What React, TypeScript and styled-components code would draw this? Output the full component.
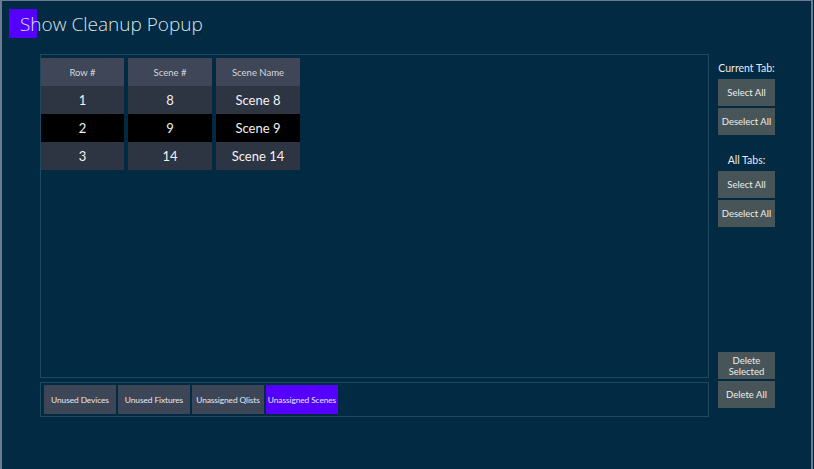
import styled, { createGlobalStyle } from 'styled-components';

const GlobalStyle = createGlobalStyle`
    html, body {
        margin: 0;
        padding: 0;
        background: #022a42;
    }
    * {
        box-sizing: border-box;
    }
`;

const columns = [
    { key: 'row', label: 'Row #', width: 83 },
    { key: 'scene', label: 'Scene #', width: 84 },
    { key: 'name', label: 'Scene Name', width: 84 }
];

const rows = [
    { row: '1', scene: '8', name: 'Scene 8', selected: false },
    { row: '2', scene: '9', name: 'Scene 9', selected: true },
    { row: '3', scene: '14', name: 'Scene 14', selected: false }
];

const tabs = ['Unused Devices', 'Unused Fixtures', 'Unassigned Qlists', 'Unassigned Scenes'];

const StyledWindow = styled.div`
    width: 813px;
    height: 469px;
    background: #022a42;
    border-top: 1px solid #6d7b92;
    border-left: 2px solid #6d7b92;
    border-right: 2px solid #6d7b92;
    font-family: Lato, 'Open Sans', sans-serif;
    color: #e6eaee;
    overflow: hidden;
`;

const StyledTitle = styled.h1`
    position: relative;
    margin: 0;
    padding: 8px 0 0 18px;
    height: 53px;
    font-family: 'Open Sans', sans-serif;
    font-weight: 300;
    font-size: 19px;
    line-height: 30px;
    color: #dde4ea;

    &::before {
        content: '';
        position: absolute;
        left: 7px;
        top: 8px;
        width: 28px;
        height: 29px;
        background: #5500ff;
    }

    span {
        position: relative;
    }
`;

const StyledBody = styled.div`
    display: grid;
    grid-template-columns: 669px 57px;
    column-gap: 9px;
    padding-left: 38px;
`;

const StyledLeft = styled.div`
    display: flex;
    flex-direction: column;
    gap: 4px;
`;

const StyledPanel = styled.div`
    height: 324px;
    border: 1px solid #1d4a5e;
    padding: 3px 0 0 0;
`;

const StyledTable = styled.div`
    display: grid;
    grid-template-columns: ${columns.map((c) => `${c.width}px`).join(' ')};
    column-gap: 4px;
    grid-auto-rows: 28px;
`;

const StyledCell = styled.div<{ $kind: 'header' | 'row' | 'selected' }>`
    display: flex;
    align-items: center;
    justify-content: center;
    background: ${({ $kind }) =>
        $kind === 'header' ? '#3e4657' : $kind === 'selected' ? '#000000' : '#2d3442'};
    color: ${({ $kind }) => ($kind === 'header' ? '#d3d7dd' : '#f2f2f2')};
    font-size: ${({ $kind }) => ($kind === 'header' ? '9.5px' : '13px')};
`;

const StyledTabBar = styled.div`
    display: flex;
    gap: 2px;
    height: 35px;
    border: 1px solid #1d4a5e;
    padding: 2px 3px;
`;

const StyledTab = styled.div<{ $active: boolean }>`
    display: flex;
    align-items: center;
    justify-content: center;
    width: 72px;
    height: 29px;
    background: ${({ $active }) => ($active ? '#5500ff' : '#3d4657')};
    color: #e8e8ee;
    font-size: 8.4px;
    letter-spacing: -0.1px;
    white-space: nowrap;
`;

const StyledSide = styled.div`
    display: flex;
    flex-direction: column;
    align-items: stretch;
`;

const StyledLabel = styled.div<{ $top: number }>`
    margin-top: ${({ $top }) => $top}px;
    height: 17px;
    text-align: center;
    font-size: 10.5px;
    line-height: 17px;
    color: #e8ecf0;
`;

const StyledSideButton = styled.button<{ $top?: number }>`
    margin-top: ${({ $top }) => $top ?? 2}px;
    height: 27px;
    border: none;
    padding: 0 2px;
    background: #485558;
    color: #eceeee;
    font-family: Lato, 'Open Sans', sans-serif;
    font-size: 9.5px;
    line-height: 11px;
`;

const App = () => (
    <>
        <GlobalStyle />
        <StyledWindow>
            <StyledTitle>
                <span>Show Cleanup Popup</span>
            </StyledTitle>
            <StyledBody>
                <StyledLeft>
                    <StyledPanel>
                        <StyledTable>
                            {columns.map((c) => (
                                <StyledCell key={c.key} $kind="header">
                                    {c.label}
                                </StyledCell>
                            ))}
                            {rows.map((r) =>
                                columns.map((c) => (
                                    <StyledCell
                                        key={`${r.row}-${c.key}`}
                                        $kind={r.selected ? 'selected' : 'row'}
                                    >
                                        {r[c.key as 'row' | 'scene' | 'name']}
                                    </StyledCell>
                                ))
                            )}
                        </StyledTable>
                    </StyledPanel>
                    <StyledTabBar>
                        {tabs.map((t, i) => (
                            <StyledTab key={t} $active={i === tabs.length - 1}>
                                {t}
                            </StyledTab>
                        ))}
                    </StyledTabBar>
                </StyledLeft>
                <StyledSide>
                    <StyledLabel $top={6}>Current Tab:</StyledLabel>
                    <StyledSideButton $top={2}>Select All</StyledSideButton>
                    <StyledSideButton>Deselect All</StyledSideButton>
                    <StyledLabel $top={17}>All Tabs:</StyledLabel>
                    <StyledSideButton $top={2}>Select All</StyledSideButton>
                    <StyledSideButton>Deselect All</StyledSideButton>
                    <StyledSideButton $top={125}>
                        Delete
                        <br />
                        Selected
                    </StyledSideButton>
                    <StyledSideButton>Delete All</StyledSideButton>
                </StyledSide>
            </StyledBody>
        </StyledWindow>
    </>
);

export default App;
